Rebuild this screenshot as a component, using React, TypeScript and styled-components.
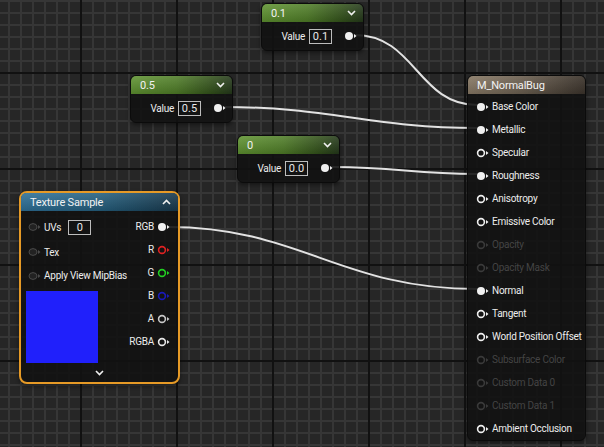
import styled, { createGlobalStyle } from "styled-components";

const GlobalStyle = createGlobalStyle`
  html, body {
    margin: 0;
    padding: 0;
    background: #262626;
  }
  body {
    font-family: Roboto, "Noto Sans", "Liberation Sans", sans-serif;
  }
`;

const Canvas = styled.div`
  position: relative;
  width: 604px;
  height: 447px;
  overflow: hidden;
  background-color: #262626;
  background-image:
    linear-gradient(to right, #111111 2px, transparent 2px),
    linear-gradient(to bottom, #111111 2px, transparent 2px),
    linear-gradient(to right, #363636 2px, transparent 2px),
    linear-gradient(to bottom, #363636 2px, transparent 2px);
  background-size: 96px 96px, 96px 96px, 12px 12px, 12px 12px;
  background-position: 80px 72px, 80px 72px, 80px 72px, 80px 72px;
  font-family: Roboto, "Noto Sans", "Liberation Sans", sans-serif;
  color: #e4e4e4;
`;

const Wires = styled.svg`
  position: absolute;
  inset: 0;
  pointer-events: none;
`;

const NodeBox = styled.div<{ $x: number; $y: number; $w: number }>`
  position: absolute;
  left: ${({ $x }) => $x}px;
  top: ${({ $y }) => $y}px;
  width: ${({ $w }) => $w}px;
  box-sizing: border-box;
  background: rgba(18, 18, 18, 0.9);
  border: 1px solid #0b0b0b;
  border-radius: 6px;
  box-shadow: 0 2px 4px rgba(0, 0, 0, 0.45);
`;

const SelectedNode = styled(NodeBox)`
  border: 2px solid #e69a26;
  border-radius: 8px;
`;

const Header = styled.div<{ $tone: "green" | "blue" | "tan" }>`
  height: 18px;
  display: flex;
  align-items: center;
  justify-content: space-between;
  padding: 0 7px 0 9px;
  border-radius: 5px 5px 0 0;
  font-size: 11px;
  letter-spacing: -0.2px;
  color: #f2f2f2;
  background: ${({ $tone }) =>
    $tone === "green"
      ? "linear-gradient(to bottom, rgba(255,255,255,0.12), rgba(0,0,0,0.15)), linear-gradient(to right, #5f9330 0%, #4f7d27 45%, #32511a 80%, #24381a 100%)"
      : $tone === "blue"
      ? "linear-gradient(to bottom, rgba(255,255,255,0.1), rgba(0,0,0,0.15)), linear-gradient(to right, #2f7199 0%, #25607f 50%, #18384c 100%)"
      : "linear-gradient(to bottom, rgba(255,255,255,0.08), rgba(0,0,0,0.15)), linear-gradient(to right, #8a7b67 0%, #6e6253 45%, #3c342c 100%)"};
`;

const ValueRow = styled.div`
  height: 28px;
  display: flex;
  align-items: center;
  justify-content: flex-end;
  padding-right: 6px;
`;

const Label = styled.span<{ $dim?: boolean }>`
  font-size: 10px;
  letter-spacing: -0.25px;
  color: ${({ $dim }) => ($dim ? "#444444" : "#ececec")};
  white-space: nowrap;
`;

const ValueBox = styled.span<{ $gap?: number }>`
  display: inline-flex;
  align-items: center;
  justify-content: center;
  min-width: 19px;
  height: 13px;
  padding: 0 1px;
  margin-left: 4px;
  margin-right: ${({ $gap }) => $gap ?? 0}px;
  border: 1px solid #bdbdbd;
  font-size: 11px;
  color: #e8e8e8;
`;

const PinRow = styled.div<{ $h?: number; $right?: boolean }>`
  height: ${({ $h }) => $h ?? 23}px;
  display: flex;
  align-items: center;
  justify-content: ${({ $right }) => ($right ? "flex-end" : "flex-start")};
  gap: 3px;
`;

const PinIcon = styled.svg`
  flex-shrink: 0;
  display: block;
`;

const TexBody = styled.div`
  display: flex;
  justify-content: space-between;
  padding-top: 3px;
`;

const LeftCol = styled.div`
  display: flex;
  flex-direction: column;
  padding-left: 7px;
`;

const RightCol = styled.div`
  display: flex;
  flex-direction: column;
  padding-top: 1px;
  padding-right: 8px;
`;

const Preview = styled.div`
  width: 72px;
  height: 72px;
  margin: 4px 0 0 -2px;
  background: #2020fb;
`;

const Footer = styled.div`
  height: 19px;
  display: flex;
  align-items: center;
  justify-content: center;
`;

const ResultBody = styled.div`
  display: flex;
  flex-direction: column;
  padding: 1px 0 0 8px;
`;

type PinKind = "filled" | "ring" | "dim" | "input";

const Pin = ({ kind, color = "#f0f0f0" }: { kind: PinKind; color?: string }) => {
  const c = kind === "dim" ? "#3a3a3a" : kind === "input" ? "#4a4a4a" : color;
  return (
    <PinIcon width="13" height="10" viewBox="0 0 13 10">
      {kind === "filled" && <circle cx="5" cy="5" r="4" fill={c} />}
      {(kind === "ring" || kind === "dim") && (
        <circle cx="5" cy="5" r="3.4" fill="none" stroke={c} strokeWidth="1.6" />
      )}
      {kind === "input" && (
        <ellipse cx="5" cy="5" rx="4" ry="3.4" fill="#222" stroke={c} strokeWidth="1" />
      )}
      <polygon points="10,3 12.5,5 10,7" fill={c} />
    </PinIcon>
  );
};

const Chevron = ({ up }: { up?: boolean }) => (
  <svg width="9" height="6" viewBox="0 0 9 6">
    <polyline
      points={up ? "1,5 4.5,1.5 8,5" : "1,1 4.5,4.5 8,1"}
      fill="none"
      stroke="#f0f0f0"
      strokeWidth="1.6"
    />
  </svg>
);

const ConstantNode = ({
  x,
  y,
  title,
  value,
}: {
  x: number;
  y: number;
  title: string;
  value: string;
}) => (
  <NodeBox $x={x} $y={y} $w={103}>
    <Header $tone="green">
      <span>{title}</span>
      <Chevron />
    </Header>
    <ValueRow>
      <Label>Value</Label>
      <ValueBox $gap={12}>{value}</ValueBox>
      <Pin kind="filled" />
    </ValueRow>
  </NodeBox>
);

const resultPins: { name: string; kind: PinKind }[] = [
  { name: "Base Color", kind: "filled" },
  { name: "Metallic", kind: "filled" },
  { name: "Specular", kind: "ring" },
  { name: "Roughness", kind: "filled" },
  { name: "Anisotropy", kind: "ring" },
  { name: "Emissive Color", kind: "ring" },
  { name: "Opacity", kind: "dim" },
  { name: "Opacity Mask", kind: "dim" },
  { name: "Normal", kind: "filled" },
  { name: "Tangent", kind: "ring" },
  { name: "World Position Offset", kind: "ring" },
  { name: "Subsurface Color", kind: "dim" },
  { name: "Custom Data 0", kind: "dim" },
  { name: "Custom Data 1", kind: "dim" },
  { name: "Ambient Occlusion", kind: "ring" },
];

const texOutputs: { name: string; kind: PinKind; color: string }[] = [
  { name: "RGB", kind: "filled", color: "#f0f0f0" },
  { name: "R", kind: "ring", color: "#e02222" },
  { name: "G", kind: "ring", color: "#22d022" },
  { name: "B", kind: "ring", color: "#1a1ab8" },
  { name: "A", kind: "ring", color: "#c8c8c8" },
  { name: "RGBA", kind: "ring", color: "#e8e8e8" },
];

const App = () => {
  return (
    <>
      <GlobalStyle />
      <Canvas>
        <Wires width="604" height="447">
          <g fill="none" stroke="#e2e2e2" strokeWidth="2" strokeLinecap="round">
            <path d="M355,35 C415,35 418,105 477,105" />
            <path d="M224,107 C330,107 372,128 477,128" />
            <path d="M332,167 C400,167 410,174 477,174" />
            <path d="M168,227 C300,227 340,289 477,289" />
          </g>
        </Wires>

        <ConstantNode x={261} y={3} title="0.1" value="0.1" />
        <ConstantNode x={130} y={75} title="0.5" value="0.5" />
        <ConstantNode x={237} y={135} title="0" value="0.0" />

        <SelectedNode $x={19} $y={191} $w={161}>
          <Header $tone="blue">
            <span>Texture Sample</span>
            <Chevron up />
          </Header>
          <TexBody>
            <LeftCol>
              <PinRow $h={26}>
                <Pin kind="input" />
                <Label>UVs</Label>
                <ValueBox>0</ValueBox>
              </PinRow>
              <PinRow $h={24}>
                <Pin kind="input" />
                <Label>Tex</Label>
              </PinRow>
              <PinRow>
                <Pin kind="input" />
                <Label>Apply View MipBias</Label>
              </PinRow>
              <Preview />
            </LeftCol>
            <RightCol>
              {texOutputs.map((p) => (
                <PinRow key={p.name} $right>
                  <Label>{p.name}</Label>
                  <Pin kind={p.kind} color={p.color} />
                </PinRow>
              ))}
            </RightCol>
          </TexBody>
          <Footer>
            <Chevron />
          </Footer>
        </SelectedNode>

        <NodeBox $x={467} $y={75} $w={119}>
          <Header $tone="tan">
            <span>M_NormalBug</span>
          </Header>
          <ResultBody>
            {resultPins.map((p) => (
              <PinRow key={p.name}>
                <Pin kind={p.kind} />
                <Label $dim={p.kind === "dim"}>{p.name}</Label>
              </PinRow>
            ))}
          </ResultBody>
        </NodeBox>
      </Canvas>
    </>
  );
};

export default App;
